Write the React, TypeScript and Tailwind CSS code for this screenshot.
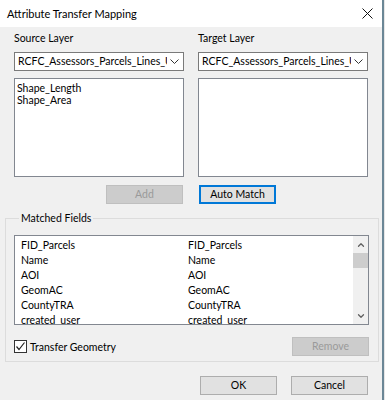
import { ChevronDown, ChevronUp } from 'lucide-react';

const FONT = { fontFamily: 'Lato, "Noto Sans", sans-serif' };

const MATCHED = ['FID_Parcels', 'Name', 'AOI', 'GeomAC', 'CountyTRA', 'created_user'];

function Combo() {
  return (
    <div className="flex h-[19px] w-[170px] items-center border border-[#7a7a7a] bg-white pl-[3px] pr-[4px]">
      <span className="flex-1 overflow-hidden whitespace-nowrap leading-[13px]">RCFC_Assessors_Parcels_Lines_Ur</span>
      <svg width="9" height="6" viewBox="0 0 9 6" className="ml-[3px] shrink-0">
        <path d="M0.5 0.5 L4.5 4.5 L8.5 0.5" fill="none" stroke="#333" strokeWidth="1" />
      </svg>
    </div>
  );
}

function Button({ label, disabled, primary }: { label: string; disabled?: boolean; primary?: boolean }) {
  return (
    <div
      className={`flex h-[19px] w-[77px] items-center justify-center leading-[13px] ${
        disabled
          ? 'border border-[#bfbfbf] bg-[#cccccc] text-[#9a9a9a]'
          : primary
            ? 'border-2 border-[#0078d7] bg-[#e1e1e1] text-black'
            : 'border border-[#adadad] bg-[#e1e1e1] text-black'
      }`}
    >
      {label}
    </div>
  );
}

export default function App() {
  return (
    <div className="flex h-[400px] w-[385px] bg-[#f0f0f0] text-[10.5px] text-black" style={FONT}>
      <div className="flex w-[382px] flex-col">
        {/* Title bar */}
        <div className="flex h-[27px] shrink-0 items-center justify-between bg-white pl-[7px] pr-[9px]">
          <span className="text-[11px] leading-[14px]">Attribute Transfer Mapping</span>
          <svg width="11" height="11" viewBox="0 0 11 11">
            <path d="M0.5 0.5 L10.5 10.5 M10.5 0.5 L0.5 10.5" stroke="#111" strokeWidth="1" />
          </svg>
        </div>

        {/* Layers */}
        <div className="flex gap-[14px] pl-[14px] pt-[4px]">
          <div className="flex w-[170px] flex-col">
            <span className="leading-[14px]">Source Layer</span>
            <div className="mt-[7px]">
              <Combo />
            </div>
            <div className="mt-[7px] h-[99px] border border-[#828790] bg-white pl-[2px] pt-[3px] leading-[12px]">
              <div>Shape_Length</div>
              <div>Shape_Area</div>
            </div>
            <div className="mt-[8px] flex justify-end pr-[1px]">
              <Button label="Add" disabled />
            </div>
          </div>
          <div className="flex w-[170px] flex-col">
            <span className="leading-[14px]">Target Layer</span>
            <div className="mt-[7px]">
              <Combo />
            </div>
            <div className="mt-[7px] h-[99px] border border-[#828790] bg-white" />
            <div className="mt-[8px] flex pl-[1px]">
              <Button label="Auto Match" primary />
            </div>
          </div>
        </div>

        {/* Matched fields group */}
        <fieldset className="mx-[5px] mt-[7px] w-[374px] border border-[#dcdcdc] pb-[5px] pl-[8px] pr-[9px]">
          <legend className="ml-[5px] px-[2px] leading-[14px]">Matched Fields</legend>
          <div className="mt-[10px] flex h-[90px] border border-[#828790] bg-white">
            <div className="flex-1 overflow-hidden pl-[6px] pt-[2px]">
              {MATCHED.map((f) => (
                <div key={f} className="flex h-[15px] items-center leading-[13px]">
                  <span className="w-[167px]">{f}</span>
                  <span>{f}</span>
                </div>
              ))}
            </div>
            <div className="flex w-[15px] flex-col items-center bg-[#f0f0f0]">
              <div className="flex h-[17px] items-center">
                <ChevronUp size={10} strokeWidth={3} color="#606060" />
              </div>
              <div className="h-[15px] w-[15px] bg-[#cdcdcd]" />
              <div className="flex-1" />
              <div className="flex h-[17px] items-center">
                <ChevronDown size={10} strokeWidth={3} color="#606060" />
              </div>
            </div>
          </div>
          <div className="mt-[12px] flex h-[19px] items-center justify-between">
            <div className="flex items-center">
              <div className="flex h-[13px] w-[13px] items-center justify-center border border-[#333333] bg-white">
                <svg width="11" height="11" viewBox="0 0 11 11">
                  <path d="M1.5 5.5 L4 8.5 L9.5 1.5" fill="none" stroke="#222" strokeWidth="1.2" />
                </svg>
              </div>
              <span className="ml-[3px] leading-[14px]">Transfer Geometry</span>
            </div>
            <Button label="Remove" disabled />
          </div>
        </fieldset>

        {/* Dialog buttons */}
        <div className="mt-[14px] flex justify-end gap-[14px] pr-[14px]">
          <Button label="OK" />
          <Button label="Cancel" />
        </div>
      </div>
      <div className="w-[2px] bg-[#6b8796]" />
      <div className="w-[1px] bg-[#e6e6e6]" />
    </div>
  );
}
